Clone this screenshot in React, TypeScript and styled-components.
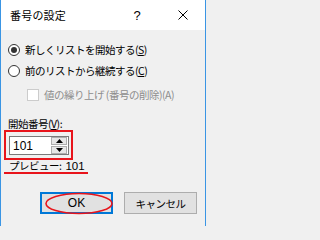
import React from "react";
import styled, { createGlobalStyle } from "styled-components";

const GlobalStyle = createGlobalStyle`
  html, body {
    margin: 0;
    padding: 0;
    background: #f0f0f0;
  }
  body {
    font-family: "Noto Sans CJK JP", "Noto Sans", sans-serif;
    color: #000;
  }
`;

const Window = styled.div`
  box-sizing: border-box;
  width: 206px;
  height: 226px;
  background: #f0f0f0;
  border-left: 1px solid #3a95e4;
  border-right: 1px solid #3a95e4;
  display: flex;
  flex-direction: column;
`;

const TitleBar = styled.div`
  height: 30px;
  background: #fff;
  display: flex;
  align-items: center;
  padding-left: 9px;
  font-size: 11px;
`;

const TitleText = styled.div`
  flex: 1;
  letter-spacing: 0.2px;
`;

const HelpMark = styled.div`
  width: 12px;
  text-align: center;
  font-family: "Liberation Sans", sans-serif;
  font-size: 13px;
  margin-right: 35px;
`;

const CloseMark = styled.svg`
  width: 10px;
  height: 10px;
  margin-right: 17px;
`;

const Body = styled.div`
  padding: 9px 7px 0 7px;
  display: flex;
  flex-direction: column;
  font-size: 10.5px;
  letter-spacing: -0.5px;
`;

const OptionRow = styled.label<{ $indent?: number; $muted?: boolean }>`
  height: 21px;
  display: flex;
  align-items: center;
  gap: 5px;
  padding-left: ${p => p.$indent ?? 0}px;
  color: ${p => (p.$muted ? "#8d8d8d" : "#000")};
`;

const Radio = styled.span<{ $checked?: boolean }>`
  box-sizing: border-box;
  width: 12px;
  height: 12px;
  border-radius: 50%;
  border: 1px solid #333;
  background: #fff;
  display: flex;
  align-items: center;
  justify-content: center;
  &::after {
    content: "";
    display: ${p => (p.$checked ? "block" : "none")};
    width: 6px;
    height: 6px;
    border-radius: 50%;
    background: #333;
  }
`;

const CheckBox = styled.span`
  box-sizing: border-box;
  width: 12px;
  height: 12px;
  border: 1px solid #cccccc;
  background: #fff;
`;

const Mnemonic = styled.span`
  text-decoration: underline;
  text-underline-offset: 1px;
`;

const FieldLabel = styled.div`
  height: 14px;
  margin-top: 11px;
  display: flex;
  align-items: center;
`;

const Highlight = styled.div`
  box-sizing: border-box;
  width: 69px;
  height: 30px;
  margin-left: -4px;
  border: 2px solid #e8141b;
  padding: 4px 2px 0 3px;
`;

const SpinBox = styled.div`
  box-sizing: border-box;
  width: 60px;
  height: 19px;
  background: #fff;
  border: 1px solid #7a7a7a;
  display: flex;
  align-items: center;
`;

const SpinValue = styled.div`
  flex: 1;
  padding-left: 3px;
  font-family: "Liberation Sans", sans-serif;
  font-size: 12px;
  letter-spacing: 0;
`;

const SpinButtons = styled.div`
  display: flex;
  flex-direction: column;
  gap: 1px;
  margin-right: 1px;
`;

const SpinButton = styled.div`
  box-sizing: border-box;
  width: 16px;
  height: 8px;
  background: #e6e6e6;
  border: 1px solid #adadad;
  display: flex;
  align-items: center;
  justify-content: center;
`;

const Preview = styled.div`
  width: 84px;
  margin-left: -4px;
  padding-left: 5px;
  box-sizing: border-box;
  height: 14px;
  line-height: 12px;
  border-bottom: 2px solid #e8141b;
`;

const PreviewNum = styled.span`
  margin-left: 4px;
  font-family: "Liberation Sans", sans-serif;
  font-size: 11.5px;
  letter-spacing: 0;
`;

const ButtonRow = styled.div`
  margin-top: 18px;
  display: flex;
  justify-content: flex-end;
  gap: 11px;
  padding-right: 1px;
`;

const DialogButton = styled.button<{ $default?: boolean }>`
  position: relative;
  box-sizing: border-box;
  width: 73px;
  height: 22px;
  padding: 0;
  background: #e1e1e1;
  border: ${p => (p.$default ? "2px solid #0078d7" : "1px solid #adadad")};
  font-family: "Noto Sans CJK JP", "Noto Sans", sans-serif;
  font-size: 10.5px;
  letter-spacing: -0.5px;
  color: #000;
  display: flex;
  align-items: center;
  justify-content: center;
`;

const OkText = styled.span`
  font-family: "Liberation Sans", sans-serif;
  font-size: 12px;
  letter-spacing: 0;
`;

const Circle = styled.svg`
  position: absolute;
  left: 3px;
  top: -1px;
  width: 70px;
  height: 22px;
  overflow: visible;
  pointer-events: none;
`;

const Arrow = ({ up }: { up?: boolean }) => (
  <svg width="7" height="4" viewBox="0 0 7 4">
    <polygon points={up ? "3.5,0 7,4 0,4" : "0,0 7,0 3.5,4"} fill="#000" />
  </svg>
);

export default function App() {
  return (
    <>
      <GlobalStyle />
      <Window>
        <TitleBar>
          <TitleText>番号の設定</TitleText>
          <HelpMark>?</HelpMark>
          <CloseMark viewBox="0 0 10 10">
            <path d="M0.5 0.5 L9.5 9.5 M9.5 0.5 L0.5 9.5" stroke="#000" strokeWidth="1" />
          </CloseMark>
        </TitleBar>
        <Body>
          <OptionRow>
            <Radio $checked />
            <span>
              新しくリストを開始する(<Mnemonic>S</Mnemonic>)
            </span>
          </OptionRow>
          <OptionRow>
            <Radio />
            <span>
              前のリストから継続する(<Mnemonic>C</Mnemonic>)
            </span>
          </OptionRow>
          <OptionRow $indent={19} $muted style={{ marginTop: 3 }}>
            <CheckBox />
            <span>値の繰り上げ (番号の削除)(A)</span>
          </OptionRow>
          <FieldLabel>
            開始番号(<Mnemonic>V</Mnemonic>):
          </FieldLabel>
          <Highlight>
            <SpinBox>
              <SpinValue>101</SpinValue>
              <SpinButtons>
                <SpinButton>
                  <Arrow up />
                </SpinButton>
                <SpinButton>
                  <Arrow />
                </SpinButton>
              </SpinButtons>
            </SpinBox>
          </Highlight>
          <Preview>
            プレビュー:<PreviewNum>101</PreviewNum>
          </Preview>
          <ButtonRow>
            <DialogButton $default>
              <OkText>OK</OkText>
              <Circle viewBox="0 0 70 22">
                <ellipse cx="34" cy="10.5" rx="33" ry="10" fill="none" stroke="#e8141b" strokeWidth="1.6" />
              </Circle>
            </DialogButton>
            <DialogButton>キャンセル</DialogButton>
          </ButtonRow>
        </Body>
      </Window>
    </>
  );
}
